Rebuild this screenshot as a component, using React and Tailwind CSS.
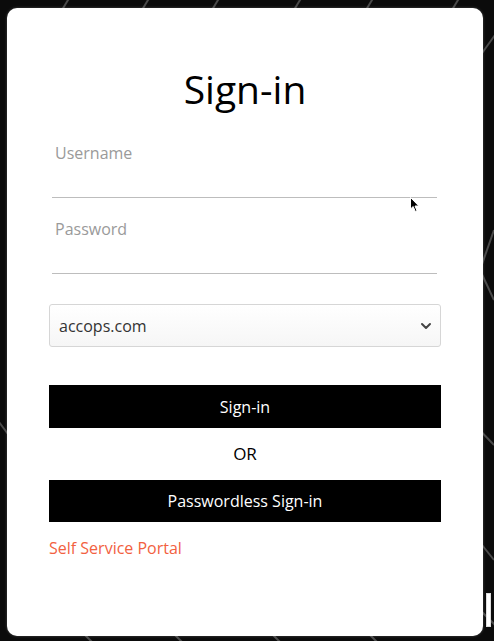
import { ChevronDown } from 'lucide-react';

function Backdrop() {
  // faint diagonal strokes behind the card
  const lines = [
    [80, -20, 50, 30], [160, -20, 130, 30], [230, -20, 200, 30], [312, -20, 282, 30],
    [384, -20, 354, 30], [470, -20, 440, 30], [520, 0, 470, 70],
    [494, 230, 480, 270], [480, 270, 494, 300], [470, 420, 494, 445], [470, 530, 494, 560],
    [70, 620, 110, 660], [160, 620, 200, 660], [258, 620, 298, 660], [355, 620, 395, 660],
    [470, 600, 500, 630], [-10, 410, 20, 450],
  ];
  return (
    <svg className="absolute inset-0" width="494" height="641">
      {lines.map(([x1, y1, x2, y2], i) => (
        <line key={i} x1={x1} y1={y1} x2={x2} y2={y2} stroke="#4a4a4a" strokeWidth="2" />
      ))}
    </svg>
  );
}

function Field({ label }) {
  return (
    <div className="ml-[3px] mr-[4px] h-[76px] border-b border-[#bdbdbd] pt-[19px] pl-[3px]">
      <span className="text-[16px] leading-6 text-[#9a9a9a]">{label}</span>
    </div>
  );
}

export default function App() {
  return (
    <div className="relative h-[641px] w-[494px] overflow-hidden bg-[#0b0b0b] pt-[8px] pl-[7px] font-['Open_Sans',sans-serif]">
      <Backdrop />
      <div className="absolute left-[486px] top-[593px] h-[34px] w-[5px] border border-[#ddd] bg-white" />

      <div className="relative flex h-[628px] w-[476px] flex-col rounded-[10px] bg-white px-[42px] shadow-[0_0_3px_rgba(255,255,255,0.25)]">
        <h1 className="mt-[57px] text-center text-[39px] leading-[48px] text-black">Sign-in</h1>

        <div className="mt-[9px]">
          <Field label="Username" />
          <Field label="Password" />
        </div>

        <div className="mt-[30px] flex h-[43px] items-center justify-between rounded-[3px] border border-[#d6d6d6] bg-gradient-to-b from-white to-[#f6f6f6] pl-[9px] pr-[6px]">
          <span className="text-[16px] text-[#333]">accops.com</span>
          <ChevronDown size={16} strokeWidth={3} className="text-[#444]" />
        </div>

        <button className="mt-[38px] h-[43px] w-full bg-black text-[16px] text-white">Sign-in</button>
        <div className="flex h-[52px] items-center justify-center text-[17px] text-black">OR</div>
        <button className="h-[42px] w-full bg-black text-[16px] text-white">Passwordless Sign-in</button>

        <a className="mt-[14px] text-[16px] leading-6 text-[#f2613f]">Self Service Portal</a>

        <svg className="absolute left-[403px] top-[189px]" width="10" height="17" viewBox="0 0 10 17">
          <path d="M0.5 0.5 L0.5 12 L3.2 9.5 L5.3 14.5 L7 13.8 L5 9 L8.8 9 Z" fill="#000" stroke="#fff" strokeWidth="1" />
        </svg>
      </div>
    </div>
  );
}
